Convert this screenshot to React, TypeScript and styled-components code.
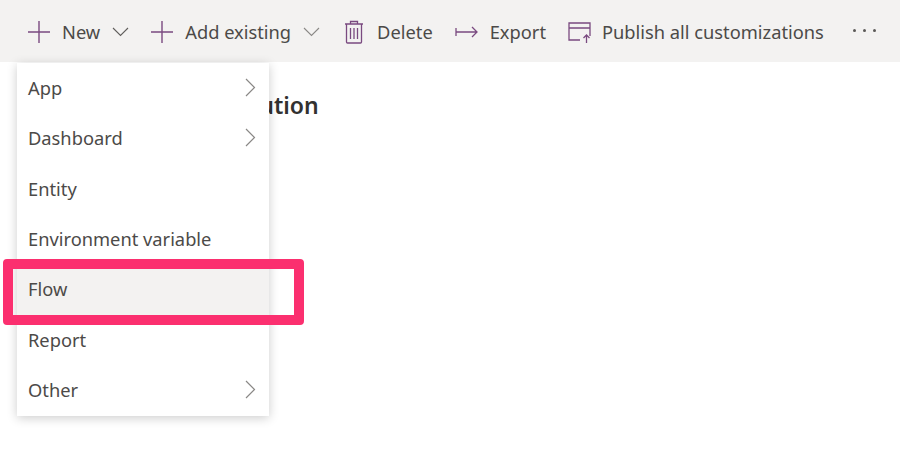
import React from "react";
import styled, { createGlobalStyle } from "styled-components";

const Global = createGlobalStyle`
  html, body { margin: 0; padding: 0; background: #fff; }
  body { font-family: "Noto Sans", "Open Sans", sans-serif; color: #3b3a39; overflow: hidden; }
`;
const Page = styled.div`
  position: relative;
  width: 900px;
  height: 461px;
  overflow: hidden;
  background: #fff;
`;
const Toolbar = styled.div`
  display: flex;
  align-items: center;
  height: 62px;
  padding: 2px 0 0 28px;
  background: #f3f2f1;
  box-sizing: border-box;
`;
const ToolItem = styled.div<{ $gap?: number; $ml?: number }>`
  display: flex;
  align-items: center;
  gap: ${(p) => p.$gap ?? 12}px;
  margin-left: ${(p) => p.$ml ?? 0}px;
  font-size: 18.3px;
  line-height: 24px;
  height: 24px;
  color: #4c4a48;
  white-space: nowrap;
`;
const More = styled.div`
  display: flex;
  gap: 7px;
  margin-left: 29px;
  margin-top: -3px;
`;
const Dot = styled.span`
  width: 3px;
  height: 3px;
  border-radius: 50%;
  background: #5a5856;
`;
const Content = styled.div`
  padding: 27px 0 0 171px;
`;
const Title = styled.h1`
  margin: 0;
  font-size: 23px;
  line-height: 32px;
  font-weight: 600;
  color: #323130;
  white-space: nowrap;
`;
const Menu = styled.div`
  position: absolute;
  left: 17px;
  top: 63px;
  width: 252px;
  height: 353px;
  background: #fff;
  box-shadow: 0 2px 10px rgba(0, 0, 0, 0.2);
  display: flex;
  flex-direction: column;
`;
const Row = styled.div<{ $active?: boolean }>`
  display: flex;
  align-items: center;
  justify-content: space-between;
  flex: 1;
  padding: 0 13px 2px 11px;
  font-size: 18.3px;
  color: #4c4a48;
  background: ${(p) => (p.$active ? "#f3f2f1" : "transparent")};
`;
const Highlight = styled.div`
  position: absolute;
  left: 3px;
  top: 259px;
  width: 301px;
  height: 66px;
  box-sizing: border-box;
  border: 10px solid #fb2f6f;
  border-radius: 4px;
`;

const Plus = () => (
  <svg width="22" height="24" viewBox="0 0 22 24" fill="none" stroke="#7a4a80" strokeWidth="1.4">
    <path d="M0 12h22M11 1v22" />
  </svg>
);
const Chevron = ({ color = "#605e5c" }: { color?: string }) => (
  <svg width="17" height="10" viewBox="0 0 17 10" fill="none" stroke={color} strokeWidth="1.1">
    <path d="M1 1l7.5 7.5L16 1" />
  </svg>
);
const Trash = () => (
  <svg width="18" height="24" viewBox="0 0 18 24" fill="none" stroke="#7a4a80" strokeWidth="1.3">
    <path d="M0 4h18M5.5 4V1.5h7V4M1.5 4v18a1 1 0 0 0 1 1h13a1 1 0 0 0 1-1V4M5.5 8v11M9 8v11M12.5 8v11" />
  </svg>
);
const ExportIcon = () => (
  <svg width="23" height="14" viewBox="0 0 23 14" fill="none" stroke="#7a4a80" strokeWidth="1.3">
    <path d="M1 3v8M1 7h21M17 2l5 5-5 5" />
  </svg>
);
const PublishIcon = () => (
  <svg width="23" height="21" viewBox="0 0 23 21" fill="none" stroke="#7a4a80" strokeWidth="1.3">
    <path d="M12 18H1V1h21v13M1 6h21M18.5 21v-8M15.5 16l3-3 3 3" />
  </svg>
);
const RightChevron = () => (
  <svg width="11" height="19" viewBox="0 0 11 19" fill="none" stroke="#8a8886" strokeWidth="1.2">
    <path d="M1 1l8.5 8.5L1 18" />
  </svg>
);

const items: { label: string; sub?: boolean; active?: boolean }[] = [
  { label: "App", sub: true },
  { label: "Dashboard", sub: true },
  { label: "Entity" },
  { label: "Environment variable" },
  { label: "Flow", active: true },
  { label: "Report" },
  { label: "Other", sub: true },
];

export default function App() {
  return (
    <Page>
      <Global />
      <Toolbar>
        <ToolItem>
          <Plus />
          New
          <Chevron />
        </ToolItem>
        <ToolItem $ml={22}>
          <Plus />
          Add existing
          <Chevron color="#8a8886" />
        </ToolItem>
        <ToolItem $ml={25} $gap={14}>
          <Trash />
          Delete
        </ToolItem>
        <ToolItem $ml={22}>
          <ExportIcon />
          Export
        </ToolItem>
        <ToolItem $ml={22} $gap={11}>
          <PublishIcon />
          Publish all customizations
        </ToolItem>
        <More>
          <Dot />
          <Dot />
          <Dot />
        </More>
      </Toolbar>
      <Content>
        <Title>New solution</Title>
      </Content>
      <Menu>
        {items.map((i) => (
          <Row key={i.label} $active={i.active}>
            {i.label}
            {i.sub && <RightChevron />}
          </Row>
        ))}
      </Menu>
      <Highlight />
    </Page>
  );
}
